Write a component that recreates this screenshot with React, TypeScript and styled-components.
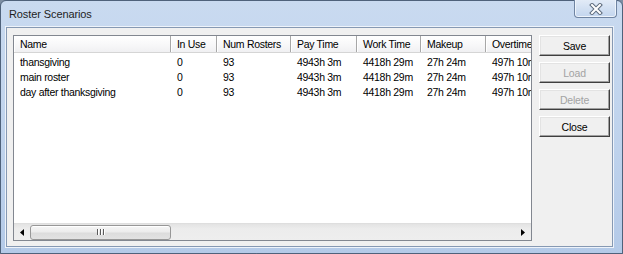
import React from 'react';
import styled, { createGlobalStyle } from 'styled-components';

const GlobalStyle = createGlobalStyle`
  html, body {
    margin: 0;
    padding: 0;
    background: #7d8ea3;
  }
  * {
    box-sizing: border-box;
  }
`;

const Window = styled.div`
  width: 623px;
  height: 254px;
  border: 1px solid #4f627b;
  border-radius: 6px 6px 0 0;
  background: linear-gradient(180deg, #c9daf0 0%, #bed2ec 60%, #b4cae8 100%);
  display: flex;
  flex-direction: column;
  font-family: "Liberation Sans", Arial, sans-serif;
`;

const TitleBar = styled.div`
  height: 26px;
  display: flex;
  align-items: flex-start;
  justify-content: space-between;
`;

const Title = styled.div`
  padding: 7px 0 0 8px;
  font-size: 11px;
  color: #1e1e1e;
  letter-spacing: -0.1px;
  line-height: 13px;
`;

const CloseButton = styled.div`
  width: 43px;
  height: 18px;
  margin: -1px 5px 0 0;
  border: 1px solid #6f84a2;
  border-top: none;
  border-radius: 0 0 4px 4px;
  background: linear-gradient(180deg, #e2ebf7 0%, #d2e0f2 50%, #c3d5ee 100%);
  box-shadow: inset 0 -1px 0 #eef4fb, inset 1px 0 0 #eef4fb, inset -1px 0 0 #eef4fb;
  display: flex;
  align-items: center;
  justify-content: center;
`;

const Client = styled.div`
  width: 607px;
  height: 220px;
  margin-left: 5px;
  border: 1px solid #8699b3;
  box-shadow: 0 0 0 1px #eef3fa;
  background: #f0f0f0;
  display: flex;
  gap: 7px;
  padding: 7px 0 0 6px;
`;

const ListView = styled.div`
  width: 519px;
  height: 206px;
  border: 1px solid #828790;
  background: #fff;
  display: flex;
  flex-direction: column;
  overflow: hidden;
`;

const HeaderRow = styled.div`
  display: flex;
  height: 17px;
  flex-shrink: 0;
  background: linear-gradient(180deg, #ffffff 0%, #f7f7f8 60%, #f0f0f2 100%);
  border-bottom: 1px solid #d5d5d5;
`;

const HeaderCell = styled.div<{ $w: number }>`
  width: ${p => p.$w}px;
  flex-shrink: 0;
  padding: 2px 0 0 6px;
  border-right: 1px solid #a7a7a7;
  box-shadow: inset 1px 0 0 #ffffff;
  font-size: 10.5px;
  letter-spacing: -0.3px;
  color: #000;
  white-space: nowrap;
  overflow: hidden;
`;

const Rows = styled.div`
  flex: 1;
  padding-top: 1px;
`;

const Row = styled.div`
  display: flex;
  height: 15px;
  align-items: center;
`;

const Cell = styled.div<{ $w: number }>`
  width: ${p => p.$w}px;
  flex-shrink: 0;
  padding-left: 6px;
  font-size: 10.5px;
  letter-spacing: -0.3px;
  color: #000;
  white-space: nowrap;
  overflow: hidden;
`;

const ScrollBar = styled.div`
  height: 17px;
  flex-shrink: 0;
  display: flex;
  align-items: center;
  background: linear-gradient(180deg, #e3e3e3 0%, #ececec 30%, #eeeeee 100%);
  border-top: 1px solid #dedede;
`;

const Arrow = styled.div`
  width: 16px;
  height: 16px;
  flex-shrink: 0;
  display: flex;
  align-items: center;
  justify-content: center;
`;

const Track = styled.div`
  flex: 1;
  height: 100%;
  display: flex;
  align-items: center;
`;

const Thumb = styled.div`
  width: 141px;
  height: 15px;
  border: 1px solid #979797;
  border-radius: 3px;
  background: linear-gradient(180deg, #f6f6f6 0%, #ececec 45%, #dcdcdc 55%, #e2e2e2 100%);
  box-shadow: inset 0 1px 0 #fff;
  display: flex;
  align-items: center;
  justify-content: center;
  gap: 1px;
`;

const Grip = styled.span`
  width: 1px;
  height: 6px;
  background: #5a5a5a;
  box-shadow: 1px 0 0 #fff;
  margin-right: 1px;
`;

const ButtonColumn = styled.div`
  display: flex;
  flex-direction: column;
  gap: 6px;
`;

const Button = styled.div<{ $disabled?: boolean }>`
  width: 71px;
  height: 21px;
  display: flex;
  align-items: center;
  justify-content: center;
  font-size: 10.5px;
  letter-spacing: -0.2px;
  color: ${p => (p.$disabled ? '#a3a3a3' : '#000')};
  background: #f0f0f0;
  border: 1px solid;
  border-color: #ffffff #3f3f3f #3f3f3f #ffffff;
  box-shadow: inset -1px -1px 0 #a0a0a0, inset 1px 1px 0 #e3e3e3;
`;

const columns = [
  { title: 'Name', w: 157 },
  { title: 'In Use', w: 46 },
  { title: 'Num Rosters', w: 74 },
  { title: 'Pay Time', w: 66 },
  { title: 'Work Time', w: 64 },
  { title: 'Makeup', w: 65 },
  { title: 'Overtime', w: 80 },
];

const rows = [
  ['thansgiving', '0', '93', '4943h 3m', '4418h 29m', '27h 24m', '497h 10m'],
  ['main roster', '0', '93', '4943h 3m', '4418h 29m', '27h 24m', '497h 10m'],
  ['day after thanksgiving', '0', '93', '4943h 3m', '4418h 29m', '27h 24m', '497h 10m'],
];

const CloseIcon = () => (
  <svg width="14" height="12" viewBox="0 0 14 12">
    <path d="M3 2 L11 10 M11 2 L3 10" stroke="#5d6b7d" strokeWidth="4" strokeLinecap="square" />
    <path d="M3 2 L11 10 M11 2 L3 10" stroke="#ffffff" strokeWidth="2" strokeLinecap="square" />
  </svg>
);

const App = () => {
  return (
    <>
      <GlobalStyle />
      <Window>
        <TitleBar>
          <Title>Roster Scenarios</Title>
          <CloseButton>
            <CloseIcon />
          </CloseButton>
        </TitleBar>
        <Client>
          <ListView>
            <HeaderRow>
              {columns.map(c => (
                <HeaderCell key={c.title} $w={c.w}>{c.title}</HeaderCell>
              ))}
            </HeaderRow>
            <Rows>
              {rows.map((r, i) => (
                <Row key={i}>
                  {r.map((v, j) => (
                    <Cell key={j} $w={columns[j].w}>{v}</Cell>
                  ))}
                </Row>
              ))}
            </Rows>
            <ScrollBar>
              <Arrow>
                <svg width="4" height="7" viewBox="0 0 4 7">
                  <path d="M4 0 L0 3.5 L4 7 Z" fill="#000" />
                </svg>
              </Arrow>
              <Track>
                <Thumb>
                  <Grip />
                  <Grip />
                  <Grip />
                </Thumb>
              </Track>
              <Arrow>
                <svg width="4" height="7" viewBox="0 0 4 7">
                  <path d="M0 0 L4 3.5 L0 7 Z" fill="#000" />
                </svg>
              </Arrow>
            </ScrollBar>
          </ListView>
          <ButtonColumn>
            <Button>Save</Button>
            <Button $disabled>Load</Button>
            <Button $disabled>Delete</Button>
            <Button>Close</Button>
          </ButtonColumn>
        </Client>
      </Window>
    </>
  );
};

export default App;
